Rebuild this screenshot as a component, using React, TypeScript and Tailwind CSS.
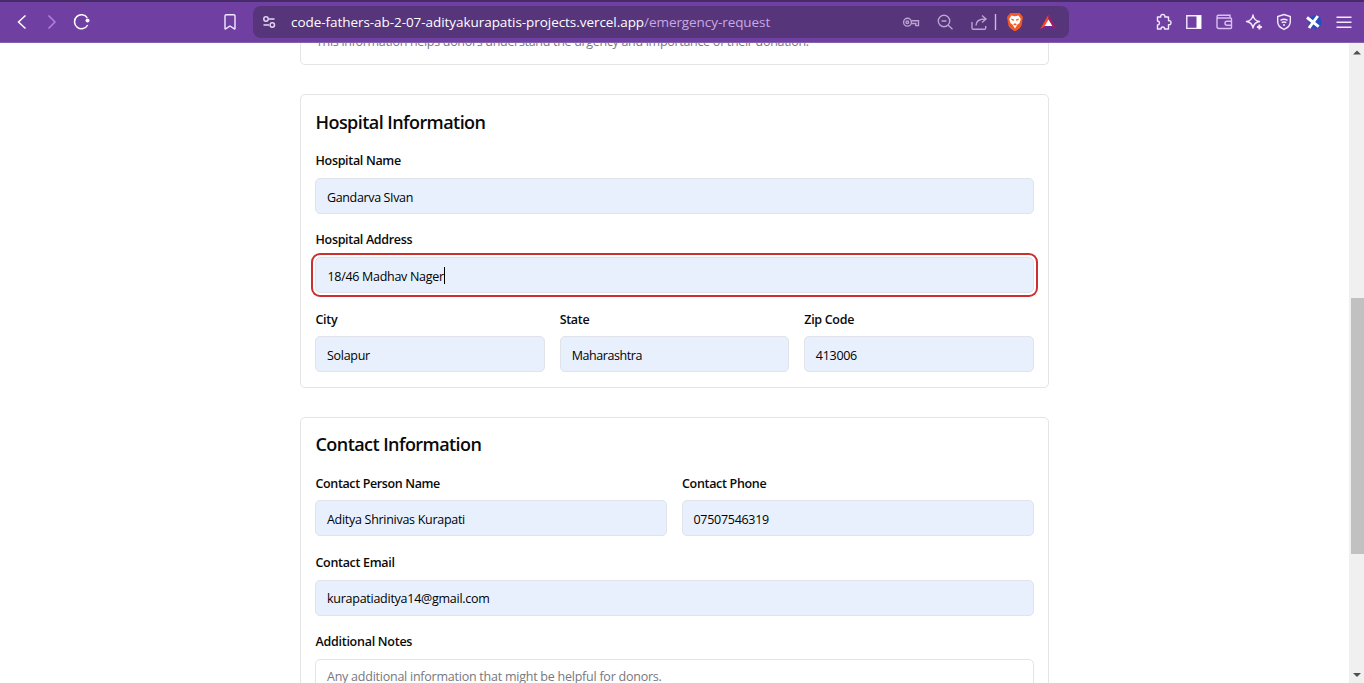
import type { ReactNode } from "react";

function Field({ label, value, labelClass = "", valueClass = "tracking-[-0.29px]", className = "", focused = false }: {
  label: string;
  value: string;
  labelClass?: string;
  valueClass?: string;
  className?: string;
  focused?: boolean;
}) {
  return (
    <div className={`flex min-w-0 flex-col ${className}`}>
      <label className={`block h-[22px] whitespace-nowrap pl-[0.5px] text-[12.5px] font-semibold tracking-[-0.32px] text-[#0a0a0a] ${labelClass || "leading-[24px]"}`}>{label}</label>
      <div
        className={`mt-[7px] flex h-9 items-center rounded-[5px] border border-[#e0e3e8] bg-[#e8f0fe] pl-[11px] pt-[3px] text-[12.5px] leading-5 text-black ${
          focused ? "shadow-[0_0_0_2px_#fff,0_0_0_4px_#c9302f]" : ""
        }`}
      >
        <span className={`whitespace-nowrap ${valueClass}`}>{value}</span>
        {focused && <span className="mb-[2px] h-[17px] w-px bg-black" />}
      </div>
    </div>
  );
}

function Card({ title, titleClass, className, children }: { title: string; titleClass: string; className: string; children: ReactNode }) {
  return (
    <section className={`w-[749px] shrink-0 rounded-[5px] border border-[#e4e4e7] px-[14px] ${className}`}>
      <h2 className={`mt-[14px] h-[26px] whitespace-nowrap pl-[0.5px] text-[18px] font-semibold text-[#0a0a0a] ${titleClass}`}>{title}</h2>
      {children}
    </section>
  );
}

function Toolbar() {
  return (
    <header className="flex h-[43px] shrink-0 items-center border-b border-t-2 border-b-[#8560ad] border-t-[#472a68] bg-[#6f40a2] text-[#f3e8ff]">
      <svg className="ml-3 h-10 w-[84px] shrink-0" viewBox="12 2 84 40" fill="none" strokeWidth="1.5">
        <path d="M25.5 15.5 18.5 22l7 6.5" stroke="#fff" />
        <path d="m48.500 15.500 6.500 6.500-6.500 6.500" stroke="#b47ee0" />
        <path d="M87.300 17.800A7 7 0 1 0 87.700 25" stroke="#fff" />
        <circle cx="87.500" cy="20.500" r="2" fill="#fff" />
      </svg>
      <svg className="ml-[124px] h-10 w-5 shrink-0" viewBox="220 2 20 40" fill="none" stroke="currentColor" strokeWidth="1.4">
        <path d="M225 16q0-1.300 1.300-1.300h7.400q1.300 0 1.300 1.300v12.600q0 .6-.6.200L230 26l-4.400 2.800q-.6.400-.6-.2z" />
      </svg>
      <div className="ml-[13px] flex h-8 w-[816px] shrink-0 items-center rounded-[8px] bg-[#56357b]">
        <svg className="ml-2 h-6 w-4 shrink-0" viewBox="260.500 10 16 24" fill="none" stroke="#e5d6f4" strokeWidth="1.5">
          <circle cx="265.500" cy="19" r="2.200" />
          <path d="M268.500 19H274M263 25h5.500" strokeWidth="1.300" />
          <circle cx="271.800" cy="25" r="2.200" />
        </svg>
        <div className="ml-[14px] w-[600px] whitespace-nowrap text-[13.5px] leading-5 text-[#c9a9e5]">
          <span className="tracking-[-0.055px] text-white">code-fathers-ab-2-07-adityakurapatis-projects.vercel.app</span>
          <span className="tracking-[-0.07px]">/emergency-request</span>
        </div>
        <svg className="ml-[9px] h-8 w-[165px] shrink-0" viewBox="900 6 165 32" fill="none" stroke="#bba4d1" strokeWidth="1.400">
          <circle cx="907.500" cy="22.200" r="3.900" />
          <circle cx="907.300" cy="22.200" r="1.300" />
          <path d="M911.300 20.800H918.500V25.600H915.800V23.500H911.300" />
          <circle cx="944" cy="21" r="5.700" />
          <path d="M941.500 21h5M948.200 25.200 952.500 29.200" />
          <path d="M972 22v6q0 1.200 1.200 1.200h11.300q1.200 0 1.200-1.200v-2M976 25.500q0-6.500 9.300-6.500M982 15.500l4 3.500-4 3.500" />
          <path d="M995.500 14v16" stroke="#cdb9df" />
          <path d="M1010.300 13h9.400l3.300 4-1.400 8.300q-1.200 3.600-6.600 6-5.400-2.400-6.600-6L1007 17z" fill="#f05a24" stroke="none" />
          <path d="M1011.400 15.600l3.600.7 3.600-.7 2.200 3.400-1.400 4.300-1.900 1.300-2.500 4-2.500-4-1.900-1.300-1.400-4.300z" fill="#fff" stroke="none" />
          <path d="m1011 18.600 3 .9v1.300l-2.300-.6zm8 0-3 .9v1.300l2.300-.6zM1013 24.300l2-1 2 1-2 1.300z" fill="#f05a24" stroke="none" />
          <path d="M1048.500 14.500 1040 29.500 1048.500 24z" fill="#ff4724" stroke="none" />
          <path d="M1048.500 14.500 1057 29.500 1048.500 24z" fill="#9e1f63" stroke="none" />
          <path d="M1040 29.500h17l-8.500-5z" fill="#662d91" stroke="none" />
          <path d="M1048.500 19.500 1052.300 26h-7.600z" fill="#fff" stroke="none" />
        </svg>
      </div>
      <svg className="ml-[81px] h-10 w-[214px] shrink-0" viewBox="1150 2 214 40" fill="none" stroke="currentColor" strokeWidth="1.400">
        <path d="M1157.500 17h3.300q-.5-2.500 2-2.500t2 2.500h3.700v3.700q2.500-.5 2.500 2t-2.500 2v4.300h-4q.2-2-1.700-2t-1.700 2h-3.600v-4q2-.2 2-2t-2-2z" strokeLinejoin="round" />
        <path d="M1186.800 15.800h14v12.600h-14z" />
        <path d="M1196.500 15.500h4.500v13h-4.500z" fill="#fff" stroke="none" />
        <path d="M1217 17.500v9q0 2 2 2h11.500q1 0 1-1v-8.500q0-1-1-1h-12q-1.500 0-1.500-1.400t1.500-1.400h11.500v2.800M1231.500 21.300H1227q-2 0-2 2t2 2h4.500" stroke="#d9bff0" />
        <path d="M1253 15q.8 5.500 6.500 6.500-5.700 1-6.500 6.500-.8-5.500-6.500-6.500 5.700-1 6.500-6.500z" strokeLinejoin="round" />
        <path d="M1259.400 24.500v5M1256.900 27h5" strokeWidth="2" />
        <path d="m1284 14.500 6.300 2v5.300q0 5-6.300 7.600-6.300-2.600-6.300-7.600v-5.300z" />
        <path d="M1280.500 20.300q3.500-2.300 7 0M1281.700 22.700q2.300-1.500 4.600 0M1283 25h2" strokeWidth="1.500" />
        <circle cx="1315" cy="22" r="6.700" fill="#254fc1" stroke="none" />
        <path d="m1307 17.500 11.700 9.200M1317.800 16l-8.800 12" stroke="#fff" strokeWidth="2.900" />
        <path d="M1336.500 17.300h15M1336.500 22.300h15M1336.500 27.300h15" />
      </svg>
    </header>
  );
}

export default function App() {
  return (
    <div className="flex h-[683px] w-[1364px] flex-col overflow-hidden bg-white font-['Open_Sans','Noto_Sans',sans-serif]">
      <Toolbar />
      <div className="flex min-h-0 flex-1">
        <main className="flex h-[640px] w-[1349px] flex-col overflow-hidden pl-[300px]">
          <section className="h-[22px] w-[749px] shrink-0 overflow-hidden rounded-b-[5px] border border-t-0 border-[#e4e4e7] px-[15px]">
            <p className="mt-[-11px] whitespace-nowrap text-[12.5px] leading-5 tracking-[-0.305px] text-[#77777e]">This information helps donors understand the urgency and importance of their donation.</p>
          </section>
          <Card title="Hospital Information" titleClass="leading-[26px] tracking-[-0.56px]" className="mt-[29px] h-[294px]">
            <Field className="mt-[14px]" label="Hospital Name" value="Gandarva SIvan" valueClass="tracking-[-0.36px]" />
            <Field className="mt-[14px]" label="Hospital Address" value="18/46 Madhav Nager" valueClass="pl-[0.5px] tracking-[-0.3px]" focused />
            <div className="mt-[14px] grid grid-cols-3 gap-[15px]">
              <Field label="City" value="Solapur" labelClass="leading-[26px]" />
              <Field label="State" value="Maharashtra" labelClass="leading-[26px] -ml-[0.5px]" valueClass="tracking-[-0.43px]" />
              <Field label="Zip Code" value="413006" labelClass="leading-[26px] -ml-[0.5px]" valueClass="-ml-[0.5px] tracking-[-0.29px]" />
            </div>
          </Card>
          <Card title="Contact Information" titleClass="leading-[24px] tracking-[-0.56px]" className="mt-[29px] h-[400px]">
            <div className="mt-[13px] grid grid-cols-2 gap-[15px]">
              <Field label="Contact Person Name" value="Aditya Shrinivas Kurapati" labelClass="leading-[26px] tracking-[-0.37px]" />
              <Field label="Contact Phone" value="07507546319" labelClass="leading-[26px] -ml-[0.5px]" valueClass="-ml-[0.5px] tracking-[-0.29px]" />
            </div>
            <Field className="mt-[15px]" label="Contact Email" value="kurapatiaditya14@gmail.com" valueClass="-mt-px tracking-[-0.26px]" />
            <label className="mt-[14px] block h-[22px] pl-[0.5px] text-[12.5px] font-semibold leading-[24px] tracking-[-0.27px] text-[#0a0a0a]">Additional Notes</label>
            <div className="mt-[7px] h-[80px] rounded-[5px] border border-[#e4e4e7] pl-[11px] pt-[7px] text-[12.5px] leading-5 tracking-[-0.24px] text-[#77777e]">Any additional information that might be helpful for donors.</div>
          </Card>
        </main>
        <aside className="flex w-[15px] shrink-0 flex-col items-center bg-[#f0f0f0]">
          <svg className="mt-[6px] h-2 w-[15px] shrink-0" viewBox="0 0 15 8"><path d="M4 5.500 8 1.500l4 4z" fill="#505050" /></svg>
          <div className="ml-[2px] mt-[241px] h-[256px] w-[13px] shrink-0 bg-[#c1c1c1]" />
          <svg className="mt-[117px] h-2 w-[15px] shrink-0" viewBox="0 0 15 8"><path d="m4 2 4 4 4-4z" fill="#505050" /></svg>
        </aside>
      </div>
    </div>
  );
}
